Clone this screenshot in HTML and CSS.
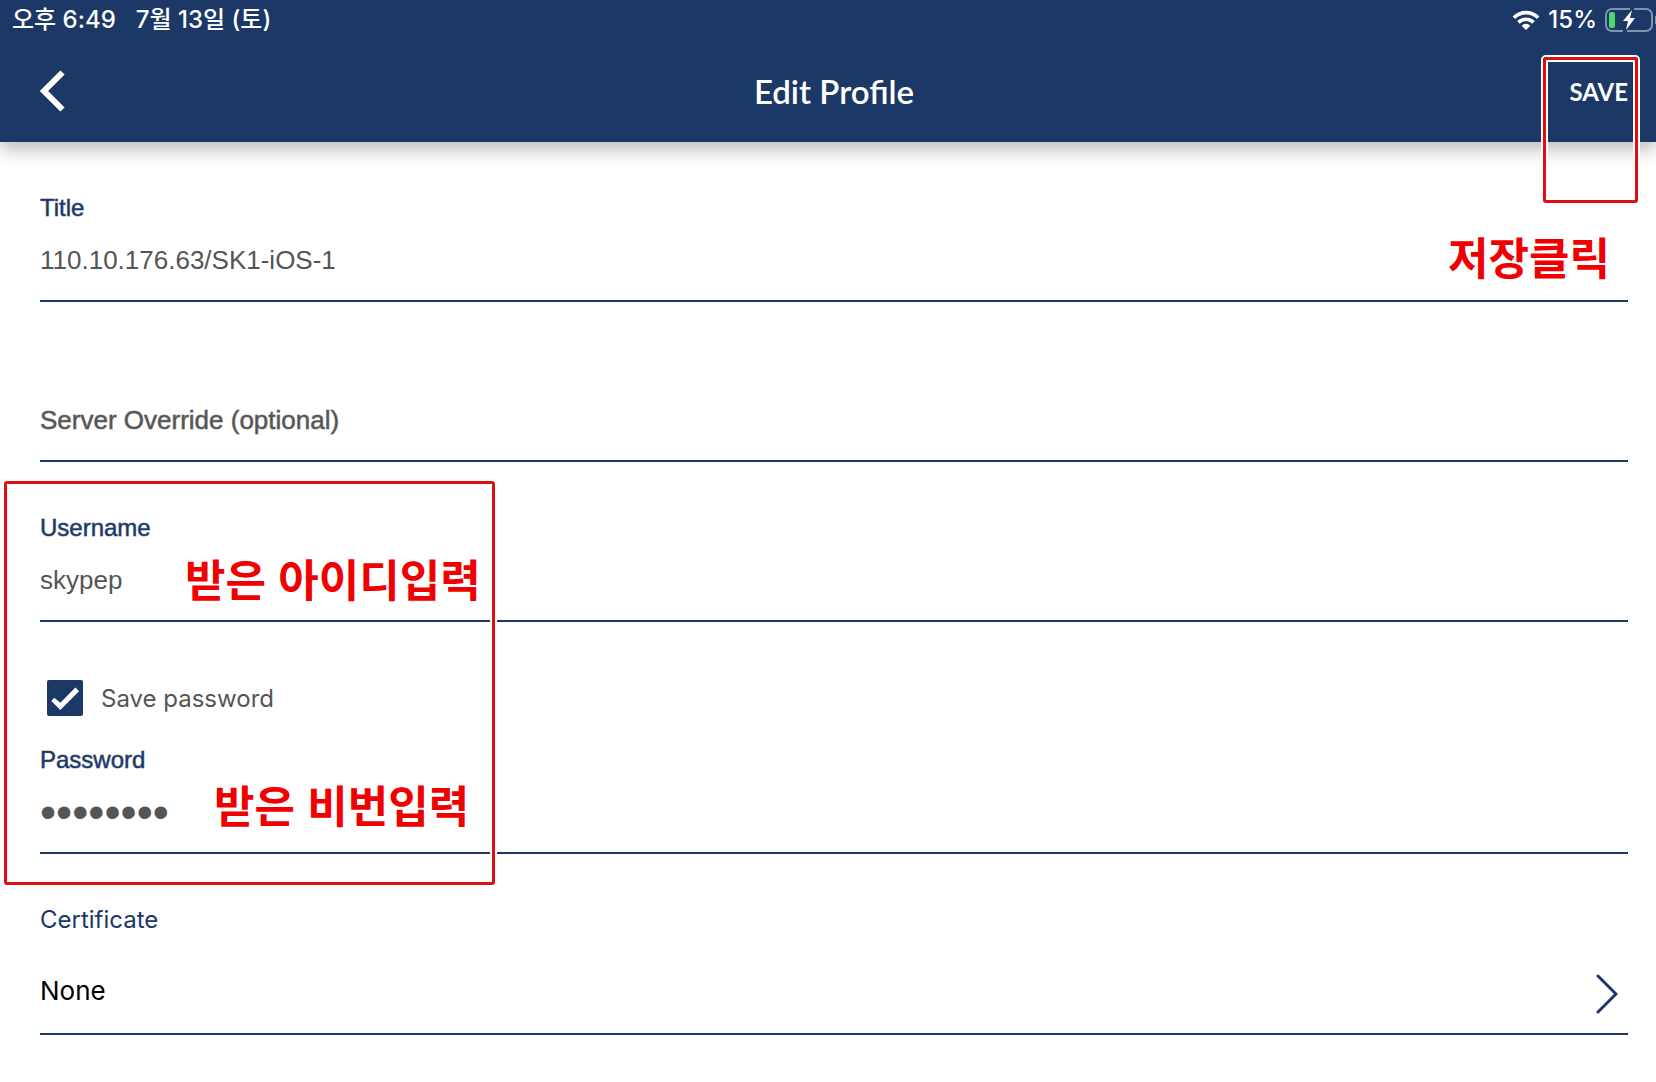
FILE: index.html
```
<!DOCTYPE html>
<html lang="ko">
<head>
    <meta charset="UTF-8">
    <meta name="viewport" content="width=device-width, initial-scale=1.0">
    <title>Edit Profile</title>
    <link rel="stylesheet" href="styles.css">
</head>
<body>
    <header class="header">
        <div class="status">
            <span>오후 6:49</span>
            <span>7월 13일 (토)</span>
            <div class="status-right">
                <svg class="wifi" viewBox="0 0 28 20" width="28" height="20">
                    <path d="M0.6 6.4a19 19 0 0 1 26.8 0l-2.5 2.6a15.4 15.4 0 0 0-21.8 0z" fill="#fff"/>
                    <path d="M5.2 11.1a12.4 12.4 0 0 1 17.6 0l-2.5 2.6a8.9 8.9 0 0 0-12.6 0z" fill="#fff"/>
                    <path d="M9.6 15.7a6.2 6.2 0 0 1 8.8 0L14 20z" fill="#fff"/>
                </svg>
                <span>15%</span>
                <svg class="battery" viewBox="0 0 51 24" width="51" height="24">
                    <path d="M25 1H7a6 6 0 0 0-6 6v10a6 6 0 0 0 6 6h11M29 1h12a6 6 0 0 1 6 6v10a6 6 0 0 1-6 6H22" fill="none" stroke="#8191ae" stroke-width="2"/>
                    <rect x="4" y="4" width="6" height="16" rx="2" fill="#4cd964"/>
                    <path d="M27 2 18 13h5l-2 9 9-12h-5z" fill="#fff"/>
                    <path d="M50 8v8h1V8z" fill="#8191ae"/>
                </svg>
            </div>
        </div>
        <div class="navbar">
            <button class="back" type="button" aria-label="Back">
                <svg viewBox="0 0 25 42" width="25" height="42">
                    <path d="M22.500 2.500 4 21l18.500 18.500" fill="none" stroke="#fff" stroke-width="6"/>
                </svg>
            </button>
            <h1>Edit Profile</h1>
            <button class="save" type="submit" form="profile">SAVE</button>
        </div>
    </header>

    <form id="profile" class="profile">
        <div class="field">
            <label for="title">Title</label>
            <input type="text" id="title" value="110.10.176.63/SK1-iOS-1">
        </div>

        <div class="field server">
            <input type="text" id="server" placeholder="Server Override (optional)" aria-label="Server Override (optional)">
        </div>

        <div class="credentials">
            <div class="field">
                <label for="username">Username</label>
                <input type="text" id="username" value="skypep">
                <span class="note">받은 아이디입력</span>
            </div>
            <div class="check">
                <input type="checkbox" id="remember" checked>
                <label for="remember">Save password</label>
            </div>
            <div class="field">
                <label for="password">Password</label>
                <input type="password" id="password" value="12345678">
                <span class="note note-password">받은 비번입력</span>
            </div>
            <div class="mark mark-credentials"></div>
        </div>

        <div class="field certificate">
            <label for="certificate">Certificate</label>
            <button class="picker" type="button" id="certificate">
                <span>None</span>
                <svg viewBox="0 0 22 40" width="22" height="40">
                    <path d="M2 2 20 20 2 38" fill="none" stroke="#1b3866" stroke-width="3" stroke-linecap="round"/>
                </svg>
            </button>
        </div>
    </form>

    <!-- Guide marks over the save button -->
    <div class="mark mark-save"></div>
    <span class="note note-save">저장클릭</span>
</body>
</html>
```
FILE: styles.css
```
* {
    box-sizing: border-box;
}

body {
    position: relative;
    margin: 0;
    background-color: #fff;
    font-family: "Liberation Sans", "Noto Sans CJK KR", sans-serif;
}

button {
    padding: 0;
    border: 0;
    background: none;
    cursor: pointer;
}

svg {
    display: block;
}

/* Header */
.header {
    height: 142px;
    background-color: #1b3866;
    color: #fff;
    box-shadow: 0 8px 16px rgba(0, 0, 0, 0.25);
}

.status {
    display: flex;
    align-items: center;
    gap: 20px;
    height: 40px;
    padding-left: 12px;
    font-family: Inter, "Noto Sans CJK KR", sans-serif;
    font-size: 24px;
    font-weight: 500;
    line-height: 36px;
}

.status-right {
    display: flex;
    align-items: center;
    gap: 8px;
    margin-left: auto;
}

.navbar {
    display: grid;
    grid-template-columns: 1fr auto 1fr;
    align-items: center;
    height: 102px;
    padding: 0 28px 0 40px;
}

.back {
    justify-self: start;
}

.navbar h1 {
    margin: 0;
    font-family: Lato, sans-serif;
    font-size: 33px;
    font-weight: 600;
}

.save {
    justify-self: end;
    color: #fff;
    font-family: Lato, sans-serif;
    font-size: 24px;
    font-weight: 700;
}

/* Form */
.profile {
    padding: 50px 28px 48px 40px;
}

.field {
    position: relative;
    border-bottom: 2px solid #1b3866;
}

.field label {
    display: block;
    color: #1b3866;
    font-size: 24px;
    line-height: 32px;
    -webkit-text-stroke: 1px rgba(27, 56, 102, 0.5);
}

.field input {
    display: block;
    width: 100%;
    height: 76px;
    padding: 0 0 4px;
    border: 0;
    outline: 0;
    background: none;
    color: #555;
    font-family: inherit;
    font-size: 26px;
}

.field input::placeholder {
    color: #555;
    opacity: 1;
    -webkit-text-stroke: 1px rgba(85, 85, 85, 0.5);
}

.field input[type="password"] {
    font-size: 46px;
}

.server {
    margin-top: 82px;
}

.credentials {
    position: relative;
    margin: 50px 0;
}

.check {
    display: flex;
    align-items: center;
    gap: 18px;
    height: 52px;
    margin: 50px 0 20px;
    padding-left: 7px;
    color: #555;
    font-family: Inter, sans-serif;
    font-size: 24px;
}

.check input {
    appearance: none;
    width: 36px;
    height: 36px;
    margin: 0;
    border-radius: 2px;
    background-color: #1b3866;
}

.check input:checked::before {
    content: "";
    display: block;
    height: 100%;
    background-color: #fff;
    clip-path: polygon(12% 58%, 20% 49%, 37% 63%, 79% 21%, 89% 31%, 37% 83%);
}

.certificate label {
    font-family: Inter, sans-serif;
    -webkit-text-stroke: 0;
}

.picker {
    display: flex;
    align-items: center;
    justify-content: space-between;
    width: 100%;
    height: 78px;
    margin-top: 19px;
    padding-right: 10px;
    color: #000;
    font-family: Inter, sans-serif;
    font-size: 26px;
}

.picker span {
    padding-bottom: 8px;
}

/* Red guide boxes and notes */
.mark {
    position: absolute;
    border: 3px solid #dc0f12;
    border-radius: 3px;
    box-shadow: 0 0 0 2px #fff, inset 0 0 0 2px #fff;
    pointer-events: none;
}

.mark-save {
    top: 57px;
    right: 18px;
    width: 95px;
    height: 146px;
}

.mark-credentials {
    top: -31px;
    left: -36px;
    width: 491px;
    height: 404px;
}

.note {
    position: absolute;
    bottom: 12px;
    left: 145px;
    color: #f00000;
    font-family: "Noto Sans CJK KR", sans-serif;
    font-size: 44px;
    font-weight: 700;
    line-height: 60px;
    pointer-events: none;
}

.note-password {
    bottom: 18px;
    left: 174px;
}

.note-save {
    top: 226px;
    right: 46px;
    bottom: auto;
    left: auto;
}
```
